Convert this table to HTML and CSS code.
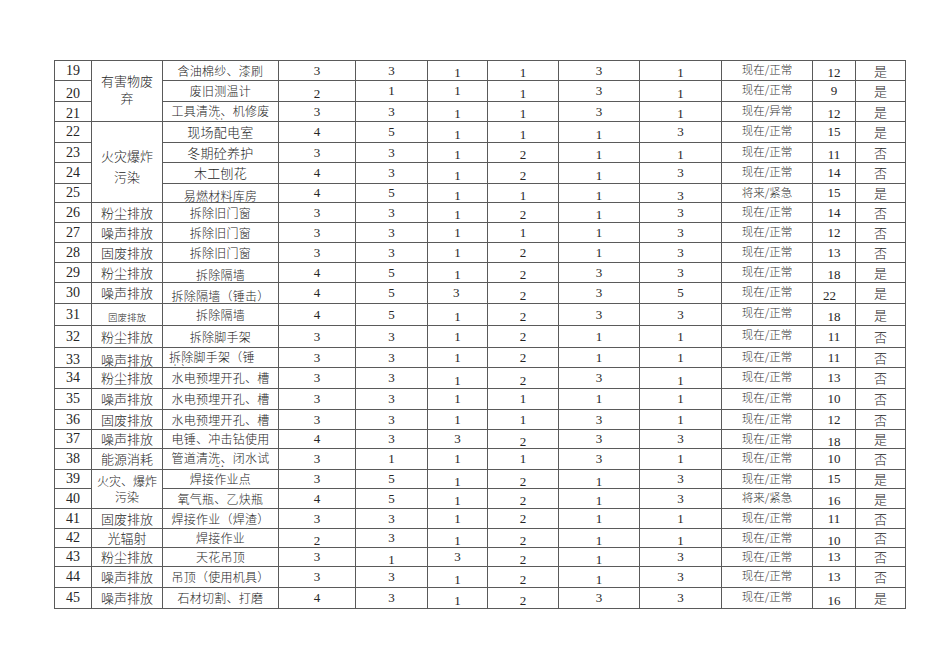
FILE: index.html
```html
<!DOCTYPE html>
<html lang="zh">
<head>
<meta charset="utf-8">
<title>环境因素识别评价表</title>
<link rel="stylesheet" href="styles.css">
</head>
<body>
<div class="page">
<table class="grid">
<colgroup>
<col class="c1"><col class="c2"><col class="c3"><col class="c4"><col class="c5"><col class="c6"><col class="c7"><col class="c8"><col class="c9"><col class="c10"><col class="c11"><col class="c12">
</colgroup>
<tbody>
<tr class="h20"><td class="no">19</td><td class="cat top" rowspan="3"><div class="catbox">有害物废<br>弃</div></td><td class="act">含油棉纱、漆刷</td><td>3</td><td>3</td><td class="lo">1</td><td class="lo lt">1</td><td>3</td><td class="lo">1</td><td class="st lt">现在/正常</td><td class="lo">12</td><td class="yn">是</td></tr>
<tr class="h21"><td class="no lo">20</td><td class="act">废旧测温计</td><td class="lo">2</td><td>1</td><td>1</td><td class="lo lt">1</td><td>3</td><td class="lo">1</td><td class="st lt">现在/正常</td><td>9</td><td class="yn">是</td></tr>
<tr class="h20"><td class="no lo">21</td><td class="act clipcell"><div class="clip">工具清洗、机修废渣</div></td><td>3</td><td>3</td><td class="lo">1</td><td class="lo lt">1</td><td>3</td><td class="lo">1</td><td class="st lt">现在/异常</td><td class="lo">12</td><td class="yn">是</td></tr>
<tr class="h21"><td class="no">22</td><td class="cat fire" rowspan="4">火灾爆炸<br>污染</td><td class="act big">现场配电室</td><td>4</td><td>5</td><td class="lo">1</td><td class="lo lt">1</td><td class="lo">1</td><td>3</td><td class="st lt">现在/正常</td><td>15</td><td class="yn">是</td></tr>
<tr class="h20"><td class="no">23</td><td class="act big">冬期砼养护</td><td>3</td><td>3</td><td class="lo">1</td><td class="lo lt">2</td><td class="lo">1</td><td class="lo">1</td><td class="st lt">现在/正常</td><td class="lo">11</td><td class="yn">否</td></tr>
<tr class="h21"><td class="no">24</td><td class="act big">木工刨花</td><td>4</td><td>3</td><td class="lo">1</td><td class="lo lt">2</td><td class="lo">1</td><td>3</td><td class="st lt">现在/正常</td><td>14</td><td class="yn">否</td></tr>
<tr class="h19"><td class="no">25</td><td class="act lo">易燃材料库房</td><td>4</td><td>5</td><td class="lo">1</td><td class="lo lt">1</td><td class="lo">1</td><td class="lo">3</td><td class="st lt">将来/紧急</td><td>15</td><td class="yn">是</td></tr>
<tr class="h20"><td class="no">26</td><td class="cat">粉尘排放</td><td class="act">拆除旧门窗</td><td>3</td><td>3</td><td class="lo">1</td><td class="lo lt">2</td><td class="lo">1</td><td>3</td><td class="st lt">现在/正常</td><td>14</td><td class="yn">否</td></tr>
<tr class="h20"><td class="no">27</td><td class="cat">噪声排放</td><td class="act">拆除旧门窗</td><td>3</td><td>3</td><td>1</td><td class="lt">1</td><td>1</td><td>3</td><td class="st lt">现在/正常</td><td>12</td><td class="yn">否</td></tr>
<tr class="h20"><td class="no">28</td><td class="cat">固废排放</td><td class="act">拆除旧门窗</td><td>3</td><td>3</td><td>1</td><td class="lt">2</td><td>1</td><td>3</td><td class="st lt">现在/正常</td><td>13</td><td class="yn">否</td></tr>
<tr class="h20"><td class="no">29</td><td class="cat">粉尘排放</td><td class="act lo">拆除隔墙</td><td>4</td><td>5</td><td class="lo">1</td><td class="lo lt">2</td><td>3</td><td>3</td><td class="st lt">现在/正常</td><td class="lo">18</td><td class="yn">是</td></tr>
<tr class="h21"><td class="no">30</td><td class="cat">噪声排放</td><td class="act lo">拆除隔墙（锤击）</td><td>4</td><td>5</td><td class="left3">3</td><td class="lo lt">2</td><td>3</td><td>5</td><td class="st lt">现在/正常</td><td class="lo n22">22</td><td class="yn">是</td></tr>
<tr class="h22"><td class="no">31</td><td class="cat small lo">固废排放</td><td class="act">拆除隔墙</td><td>4</td><td>5</td><td class="lo">1</td><td class="lo lt">2</td><td>3</td><td>3</td><td class="st lt">现在/正常</td><td class="lo">18</td><td class="yn">是</td></tr>
<tr class="h22"><td class="no">32</td><td class="cat">粉尘排放</td><td class="act">拆除脚手架</td><td>3</td><td>3</td><td>1</td><td class="lt">2</td><td>1</td><td>1</td><td class="st lt">现在/正常</td><td>11</td><td class="yn">否</td></tr>
<tr class="h20"><td class="no lo">33</td><td class="cat lo">噪声排放</td><td class="act clipcell"><div class="clip narrow">拆除脚手架（锤击）</div></td><td>3</td><td>3</td><td>1</td><td class="lt">2</td><td>1</td><td>1</td><td class="st lt">现在/正常</td><td>11</td><td class="yn">否</td></tr>
<tr class="h21"><td class="no">34</td><td class="cat">粉尘排放</td><td class="act">水电预埋开孔、槽</td><td>3</td><td>3</td><td class="lo">1</td><td class="lo lt">2</td><td>3</td><td class="lo">1</td><td class="st lt">现在/正常</td><td>13</td><td class="yn">否</td></tr>
<tr class="h21"><td class="no">35</td><td class="cat">噪声排放</td><td class="act">水电预埋开孔、槽</td><td>3</td><td>3</td><td>1</td><td class="lt">1</td><td>1</td><td>1</td><td class="st lt">现在/正常</td><td>10</td><td class="yn">否</td></tr>
<tr class="h20"><td class="no">36</td><td class="cat">固废排放</td><td class="act">水电预埋开孔、槽</td><td>3</td><td>3</td><td>1</td><td class="lt">1</td><td>3</td><td>1</td><td class="st lt">现在/正常</td><td>12</td><td class="yn">否</td></tr>
<tr class="h19"><td class="no">37</td><td class="cat">噪声排放</td><td class="act">电锤、冲击钻使用</td><td>4</td><td>3</td><td>3</td><td class="lo lt">2</td><td>3</td><td>3</td><td class="st lt">现在/正常</td><td class="lo">18</td><td class="yn">是</td></tr>
<tr class="h21"><td class="no">38</td><td class="cat">能源消耗</td><td class="act clipcell"><div class="clip">管道清洗、闭水试验</div></td><td>3</td><td>1</td><td>1</td><td class="lt">1</td><td>3</td><td>1</td><td class="st lt">现在/正常</td><td>10</td><td class="yn">否</td></tr>
<tr class="h19"><td class="no">39</td><td class="cat fire2" rowspan="2">火灾、爆炸<br>污染</td><td class="act">焊接作业点</td><td>3</td><td>5</td><td class="lo">1</td><td class="lo lt">2</td><td class="lo">1</td><td>3</td><td class="st lt">现在/正常</td><td>15</td><td class="yn">是</td></tr>
<tr class="h20"><td class="no">40</td><td class="act">氧气瓶、乙炔瓶</td><td>4</td><td>5</td><td class="lo">1</td><td class="lo lt">2</td><td class="lo">1</td><td>3</td><td class="st lt">将来/紧急</td><td class="lo">16</td><td class="yn">是</td></tr>
<tr class="h20"><td class="no">41</td><td class="cat">固废排放</td><td class="act">焊接作业（焊渣）</td><td>3</td><td>3</td><td>1</td><td class="lt">2</td><td>1</td><td>1</td><td class="st lt">现在/正常</td><td>11</td><td class="yn">否</td></tr>
<tr class="h19"><td class="no">42</td><td class="cat">光辐射</td><td class="act">焊接作业</td><td class="lo">2</td><td>3</td><td class="lo">1</td><td class="lo lt">2</td><td class="lo">1</td><td class="lo">1</td><td class="st lt">现在/正常</td><td class="lo">10</td><td class="yn">否</td></tr>
<tr class="h19"><td class="no">43</td><td class="cat">粉尘排放</td><td class="act">天花吊顶</td><td>3</td><td class="lo">1</td><td>3</td><td class="lo lt">2</td><td class="lo">1</td><td>3</td><td class="st lt">现在/正常</td><td>13</td><td class="yn">否</td></tr>
<tr class="h21"><td class="no">44</td><td class="cat">噪声排放</td><td class="act">吊顶（使用机具）</td><td>3</td><td>3</td><td class="lo">1</td><td class="lo lt">2</td><td class="lo">1</td><td>3</td><td class="st lt">现在/正常</td><td>13</td><td class="yn">否</td></tr>
<tr class="h21"><td class="no">45</td><td class="cat">噪声排放</td><td class="act">石材切割、打磨</td><td>4</td><td>3</td><td class="lo">1</td><td class="lo lt">2</td><td>3</td><td>3</td><td class="st lt">现在/正常</td><td class="lo">16</td><td class="yn">是</td></tr>
</tbody>
</table>
</div>
</body>
</html>
```

FILE: styles.css
```css
html, body {
  margin: 0;
  padding: 0;
  background: #ffffff;
}

.page {
  padding: 60px 0 0 54px;
}

.grid {
  border-collapse: collapse;
  table-layout: fixed;
  width: 851px;
  font-family: "Liberation Serif", "Noto Sans CJK SC", serif;
  color: #262626;
}

.c1 { width: 37px; }
.c2 { width: 71px; }
.c3 { width: 116px; }
.c4 { width: 77px; }
.c5 { width: 72px; }
.c6 { width: 60px; }
.c7 { width: 71px; }
.c8 { width: 81px; }
.c9 { width: 82px; }
.c10 { width: 91px; }
.c11 { width: 43px; }
.c12 { width: 50px; }

.h19 { height: 19px; }
.h20 { height: 20px; }
.h21 { height: 21px; }
.h22 { height: 22px; }

.grid td {
  border: 1px solid #5a5a5a;
  padding: 0;
  text-align: center;
  vertical-align: middle;
  font-size: 13px;
  line-height: 12px;
  white-space: nowrap;
  overflow: hidden;
}

.grid td.lt {
  border-left-color: #a8a8a8;
}

.grid td.st {
  font-family: "Noto Sans CJK SC", sans-serif;
  font-size: 11.5px;
  font-weight: 300;
  color: #333;
  vertical-align: top;
  padding-top: 2px;
}

.grid td.lo {
  padding-top: 5px;
}

.grid td.no {
  font-size: 14px;
}

.grid td.cat {
  font-family: "Noto Sans CJK SC", sans-serif;
  font-size: 13px;
  font-weight: 300;
}

.grid td.cat.small {
  font-size: 9.5px;
}

.grid td.top {
  line-height: 17px;
  padding-top: 0;
  padding-bottom: 4px;
}

.catbox {
  white-space: normal;
}

.grid td.fire {
  line-height: 21px;
  padding-top: 7px;
}

.grid td.fire2 {
  font-size: 12px;
  line-height: 16px;
}

.grid td.act {
  font-family: "Noto Sans CJK SC", sans-serif;
  font-size: 12px;
  letter-spacing: 0.25px;
  font-weight: 300;
}

.grid td.act.big {
  font-size: 13px;
}

.grid td.clipcell {
  vertical-align: top;
  white-space: normal;
}

.clip {
  height: 18px;
  overflow: hidden;
  line-height: 13px;
  padding: 2px 5px 0;
  box-sizing: border-box;
  word-break: break-all;
}

.clip.narrow {
  padding: 2px 12px 0 6px;
  text-align: left;
}

.grid td.yn {
  font-family: "Noto Sans CJK SC", sans-serif;
  font-size: 13px;
  font-weight: 300;
}

.grid td.left3 {
  text-align: left;
  padding-left: 25px;
}

.grid td.n22 {
  text-align: left;
  padding-left: 10px;
}
```
